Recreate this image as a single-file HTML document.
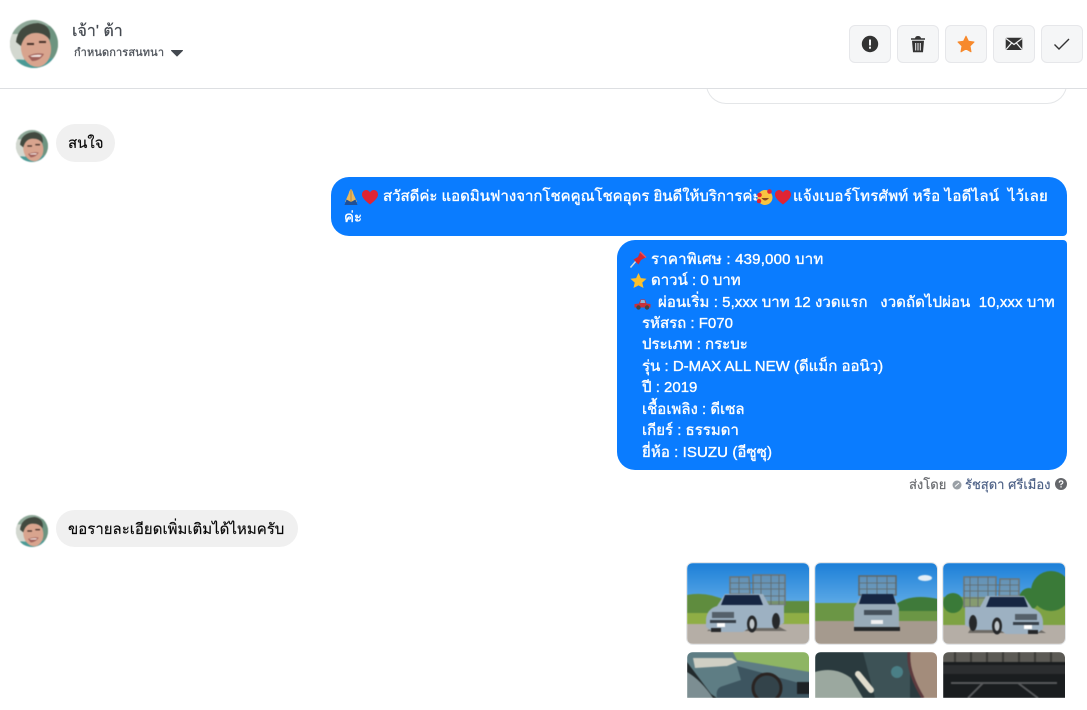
<!DOCTYPE html>
<html lang="th"><head><meta charset="utf-8"><title>Chat</title>
<style>
*{box-sizing:border-box}
html,body{margin:0;padding:0;background:#fff}
body{width:1087px;height:710px;position:relative;overflow:hidden;font-family:"Liberation Sans","Noto Sans CJK SC",sans-serif;color:#050505}
.a{position:absolute}
.t{position:absolute;white-space:pre;font-size:15px;line-height:21.5px;-webkit-text-stroke:.15px currentColor}
.w{color:#fff;-webkit-text-stroke:.35px #fff}
.btn{position:absolute;top:25px;width:42px;height:38px;background:#f5f6f7;border:1px solid #e6e7ea;border-radius:6px}
.btn svg{position:absolute;left:9px;top:7px}
.blue{position:absolute;background:#0a7cff}
.ph{position:absolute;width:122px;border-radius:6px;overflow:hidden;box-shadow:0 0 0 1px #e4e6e8}
.ph svg{filter:blur(.45px)}
.av{filter:blur(.6px)}
svg{display:block}
</style></head><body>
<svg width="0" height="0" style="position:absolute"><defs>
<clipPath id="c"><circle cx="24" cy="24" r="24"/></clipPath>
<g id="av" clip-path="url(#c)">
<rect width="48" height="48" fill="#8ea898"/>
<rect x="0" y="14" width="14" height="34" fill="#d3d8d0"/>
<rect x="36" y="6" width="12" height="32" fill="#6d9480"/>
<path d="M4 40Q14 38 24 44Q36 38 44 38V48H4Z" fill="#4a9a96"/>
<ellipse cx="26" cy="28" rx="15" ry="19" transform="rotate(-8 26 28)" fill="#d8a48e"/>
<path d="M6 22Q8 4 28 3Q42 5 40 20Q34 12 24 13Q14 14 11 26Z" fill="#42493f"/>
<rect x="17" y="23" width="7" height="2" fill="#4a342c"/><rect x="29" y="21" width="7" height="2" fill="#4a342c"/>
<path d="M18 36Q26 32 34 34Q30 41 22 41Z" fill="#a0615a"/><path d="M20 36Q26 34 32 35L30 37H22Z" fill="#f1e4df"/>
</g>
<linearGradient id="sky" x1="0" y1="0" x2="0" y2="1"><stop offset="0" stop-color="#1c7fd8"/><stop offset=".5" stop-color="#5ca9e6"/><stop offset="1" stop-color="#a0cdec"/></linearGradient>
<g id="truck">
<path d="M43 14H62L63 31H43Z M66 12H98V42H66Z" fill="#8d9596" fill-opacity=".55" stroke="#6d7576" stroke-width="1.500"/>
<path d="M43 20H98M43 26H98M43 33H98M52 14V33M74 12V42M84 12V42M92 12V42" stroke="#5f686a" stroke-width=".8"/>
<path d="M19 56Q20 46 30 43L38 31H76L82 42H97V60L88 65H62L56 69H26L19 64Z" fill="#9db1c2"/>
<path d="M38 32H72L76 42H34Z" fill="#162642"/>
<rect x="25" y="49" width="22" height="6" fill="#55606a"/><rect x="23" y="57" width="26" height="3" fill="#37404a"/><rect x="30" y="60" width="8" height="4" fill="#fff"/>
<ellipse cx="65" cy="61" rx="5" ry="8.500" fill="#26282a"/><ellipse cx="65" cy="61" rx="2.500" ry="5" fill="#c0c6ca"/><ellipse cx="89" cy="58" rx="4" ry="8" fill="#26282a"/><rect x="24" y="65" width="10" height="4" fill="#26282a"/>
</g>
</defs></svg>

<!-- header -->
<svg class="a av" style="left:10px;top:20px" width="48" height="48"><use href="#av"/></svg>
<div class="t" style="left:72px;top:21px;font-size:16px;color:#444950;-webkit-text-stroke:.25px #444950">เจ้า' ต้า</div>
<div class="t" style="left:74px;top:45px;font-size:11px;line-height:16px;color:#50555c;-webkit-text-stroke:.3px #50555c;letter-spacing:.12px">กำหนดการสนทนา</div>
<svg class="a" style="left:171px;top:49px" width="12" height="8"><path d="M.5 1.500H11.500L6 7Z" fill="#444950" stroke="#444950" stroke-linejoin="round"/></svg>

<div class="btn" style="left:849px"><svg width="22" height="22"><circle cx="11" cy="11" r="8.200" fill="#333"/><rect x="10" y="6.500" width="2" height="6" fill="#f5f6f7"/><rect x="10" y="13.700" width="2" height="2" fill="#f5f6f7"/></svg></div>
<div class="btn" style="left:897px"><svg width="22" height="22"><path d="M4 5.200H18V6.800H4Z M8 5.200Q8.500 3 11 3Q13.500 3 14 5.200Z" fill="#333"/><path d="M5 7.800H17L16 19.300H6Z" fill="#333"/><path d="M8.700 10V17.500M11 10V17.500M13.300 10V17.500" stroke="#f5f6f7" stroke-width="1"/></svg></div>
<div class="btn" style="left:945px"><svg width="22" height="22"><path d="M11 3.200L13.500 8.300L19 9L15 13L16 18.800L11 16L6 18.800L7 13L3 9L8.500 8.300Z" fill="#f7892c" stroke="#f7892c" stroke-linejoin="round"/></svg></div>
<div class="btn" style="left:993px"><svg width="22" height="22"><rect x="2.700" y="4.700" width="16.600" height="12.300" rx="1" fill="#333"/><path d="M3 5.500L11 11.500L19 5.500M3 16.500L8.800 9.800M19 16.500L13.200 9.800" stroke="#f5f6f7" stroke-width="1.200" fill="none"/></svg></div>
<div class="btn" style="left:1041px"><svg width="22" height="22"><path d="M3.500 11.500L8 16L18 6" stroke="#333" stroke-width="1.400" fill="none"/></svg></div>

<div class="a" style="left:0;top:88px;width:1087px;height:1px;background:#dddfe2"></div>
<div class="a" style="left:706px;top:70px;width:361px;height:34px;border:1px solid #e4e6e8;border-top:0;border-radius:0 0 20px 20px;clip-path:inset(19px 0 0 0)"></div>

<!-- messages -->
<svg class="a av" style="left:16px;top:130px" width="32" height="32" viewBox="0 0 48 48"><use href="#av"/></svg>
<div class="a" style="left:56px;top:124px;width:59px;height:38px;background:#f0f0f0;border-radius:19px"></div>
<div class="t" style="left:68px;top:133px">สนใจ</div>

<div class="blue" style="left:331px;top:177px;width:736px;height:59px;border-radius:18px 18px 4px 18px"></div>
<svg class="a" style="left:344px;top:188px" width="36" height="18" viewBox="0 0 36 18">
<path d="M7 1Q8.500 2 9.500 6L13 14H1L4.500 6Q5.500 2 7 1Z" fill="#e8b85e"/><path d="M7 2V14" stroke="#a87a30" stroke-width=".7"/><path d="M2.500 11.500L7 14L11.500 11.500L13.500 17H.5Z" fill="#1f4f96"/>
<path d="M26 16.500C20 12 18 9 18 6.500C18 3.800 20 2 22 2C24 2 25.300 3 26 4.500C26.700 3 28 2 30 2C32 2 34 3.800 34 6.500C34 9 32 12 26 16.500Z" fill="#e02434"/></svg>
<div class="t w" style="left:383px;top:186px;letter-spacing:-.03px">สวัสดีค่ะ แอดมินฟางจากโชคคูณโชคอุดร ยินดีให้บริการค่ะ</div>
<svg class="a" style="left:757px;top:188px" width="36" height="18" viewBox="0 0 36 18">
<circle cx="8" cy="9.500" r="7.500" fill="#f8c440"/><circle cx="2.500" cy="7" r="2.300" fill="#e02434"/><circle cx="12.500" cy="3.500" r="2.300" fill="#e02434"/><circle cx="2" cy="13" r="2.300" fill="#e02434"/><path d="M4.500 10Q8 15 12 10Z" fill="#8a4a20"/>
<path d="M26 16.500C20 12 18 9 18 6.500C18 3.800 20 2 22 2C24 2 25.300 3 26 4.500C26.700 3 28 2 30 2C32 2 34 3.800 34 6.500C34 9 32 12 26 16.500Z" fill="#e02434"/></svg>
<div class="t w" style="left:793px;top:186px;letter-spacing:.2px">แจ้งเบอร์โทรศัพท์ หรือ ไอดีไลน์  ไว้เลย</div>
<div class="t w" style="left:344px;top:207px">ค่ะ</div>

<div class="blue" style="left:617px;top:240px;width:450px;height:230px;border-radius:18px 4px 18px 18px"></div>
<svg class="a" style="left:630px;top:251px" width="17" height="17" viewBox="0 0 17 17"><path d="M.5 16.500L6.500 9.500" stroke="#d3d8de" stroke-width="1.500"/><path d="M3.500 8.500L8 6L10 1.500L15.500 6.500L11 9L8.500 13.500Z" fill="#d8262f"/><path d="M10 .8L16 6.500" stroke="#e9545c" stroke-width="1.500"/></svg>
<svg class="a" style="left:630px;top:272px" width="17" height="17" viewBox="0 0 18 17"><path d="M9 .5L11.500 6L17.500 6.700L13 10.800L14.300 16.500L9 13.600L3.700 16.500L5 10.800L.5 6.700L6.500 6Z" fill="#fbc02d"/></svg>
<svg class="a" style="left:634px;top:297px" width="17" height="13" viewBox="0 0 17 13"><path d="M.5 7L5 6.500L6.500 2.500H11L12.500 6.500L16.500 7V10.500H.5Z" fill="#c9313a"/><path d="M7 3H10.500L11.300 6H6.200Z" fill="#8fb4d8"/><circle cx="4.500" cy="10.500" r="2.200" fill="#444"/><circle cx="13" cy="10.500" r="2.200" fill="#444"/></svg>
<div class="t w" style="left:651px;top:249px;letter-spacing:.2px">ราคาพิเศษ : 439,000 บาท</div>
<div class="t w" style="left:651px;top:270px">ดาวน์ : 0 บาท</div>
<div class="t w" style="left:658px;top:292px;letter-spacing:.06px">ผ่อนเริ่ม : 5,xxx บาท 12 งวดแรก   งวดถัดไปผ่อน  10,xxx บาท</div>
<div class="t w" style="left:642px;top:313px">รหัสรถ : F070</div>
<div class="t w" style="left:642px;top:334px">ประเภท : กระบะ</div>
<div class="t w" style="left:642px;top:356px">รุ่น : D-MAX ALL NEW (ดีแม็ก ออนิว)</div>
<div class="t w" style="left:642px;top:377px">ปี : 2019</div>
<div class="t w" style="left:642px;top:399px">เชื้อเพลิง : ดีเซล</div>
<div class="t w" style="left:642px;top:420px">เกียร์ : ธรรมดา</div>
<div class="t w" style="left:642px;top:442px;letter-spacing:.08px">ยี่ห้อ : ISUZU (อีซูซุ)</div>

<div class="t" style="left:909px;top:476px;font-size:13px;line-height:18px;color:#65676b">ส่งโดย</div>
<svg class="a" style="left:952px;top:480px" width="10" height="10"><circle cx="5" cy="5" r="4.500" fill="#9aa0a6"/><path d="M3 6.500L7 3" stroke="#fff"/></svg>
<div class="t" style="left:965px;top:476px;font-size:13px;line-height:18px;color:#4b5f85">รัชสุดา ศรีเมือง</div>
<svg class="a" style="left:1055px;top:478px" width="12" height="12"><circle cx="6" cy="6" r="6" fill="#65676b"/><path d="M4.200 4.600Q4.500 2.800 6.200 2.900Q8 3.100 7.800 4.700Q7.600 5.600 6 6.300V7.300" fill="none" stroke="#fff" stroke-width="1.200"/><rect x="5.400" y="8.200" width="1.300" height="1.300" fill="#fff"/></svg>

<svg class="a av" style="left:16px;top:515px" width="32" height="32" viewBox="0 0 48 48"><use href="#av"/></svg>
<div class="a" style="left:56px;top:510px;width:242px;height:37px;background:#f0f0f0;border-radius:19px"></div>
<div class="t" style="left:68px;top:519px">ขอรายละเอียดเพิ่มเติมได้ไหมครับ</div>

<!-- photos -->
<div class="ph" style="left:687px;top:563px;height:81px"><svg width="123" height="81" viewBox="0 0 123 81"><rect width="123" height="81" fill="url(#sky)"/><path d="M0 32Q20 28 40 38H123V50H0Z" fill="#5f8c3e"/><rect y="50" width="123" height="12" fill="#8fae45"/><rect y="61" width="123" height="20" fill="#b5aea6"/><path d="M20 68H100L85 60H30Z" fill="#3f3e3c" opacity=".6"/><use href="#truck"/></svg></div>
<div class="ph" style="left:815px;top:563px;height:81px"><svg width="123" height="81" viewBox="0 0 123 81"><rect width="123" height="81" fill="url(#sky)"/><ellipse cx="110" cy="15" rx="7" ry="3" fill="#e4eef6"/><rect y="40" width="123" height="19" fill="#6b9645"/><path d="M80 42Q95 30 123 36V48H80Z" fill="#3f7a3a"/><rect y="58" width="123" height="23" fill="#a59a8e"/><path d="M44 13H81V32H44Z" fill="#8d9596" fill-opacity=".5" stroke="#5f686a" stroke-width="1.500"/><path d="M44 20H81M44 26H81M52 13V32M62 13V32M72 13V32" stroke="#5f686a" stroke-width=".8"/><path d="M47 31H78L84 45V65H39V45Z" fill="#98abb8"/><path d="M47 31H78L81 41H44Z" fill="#162642"/><rect x="49" y="47" width="28" height="5" fill="#45505a"/><rect x="56" y="57" width="12" height="4" fill="#f1f1f1"/><rect x="39" y="64" width="46" height="4" fill="#26282a"/></svg></div>
<div class="ph" style="left:943px;top:563px;height:81px"><svg width="123" height="81" viewBox="0 0 123 81"><rect width="123" height="81" fill="url(#sky)"/><rect y="34" width="123" height="28" fill="#7ea243"/><ellipse cx="108" cy="28" rx="20" ry="20" fill="#3a7a38"/><ellipse cx="86" cy="36" rx="10" ry="11" fill="#3a7a38"/><ellipse cx="10" cy="40" rx="10" ry="10" fill="#3a7a38"/><rect y="62" width="123" height="19" fill="#b5aea6"/><path d="M25 70H103L90 62H30Z" fill="#3f3e3c" opacity=".6"/><g transform="translate(119 2) scale(-1 1)"><use href="#truck"/></g></svg></div>
<div class="ph" style="left:687px;top:652px;height:46px;border-radius:6px 6px 0 0;box-shadow:none"><svg width="123" height="46" viewBox="0 0 123 46"><rect width="123" height="46" fill="#5e7d84"/><path d="M0 0H123V20L50 8L46 0Z" fill="#8eb564"/><path d="M6 6H45L50 10L40 14L8 16Z" fill="#cfcfc4"/><path d="M0 10L24 42L30 46H0Z" fill="#222a2c"/><path d="M0 20Q14 28 26 46H0Z" fill="#7c8e92"/><path d="M30 46Q28 36 36 34L54 28L50 14L123 34V46Z" fill="#3d5560"/><circle cx="80" cy="36" r="14" fill="#33434a" stroke="#2a2422" stroke-width="3"/><rect x="110" y="30" width="13" height="12" fill="#1d2225"/></svg></div>
<div class="ph" style="left:815px;top:652px;height:46px;border-radius:6px 6px 0 0;box-shadow:none"><svg width="123" height="46" viewBox="0 0 123 46"><rect width="123" height="46" fill="#2a3a3e"/><path d="M48 0H95V46H60Z" fill="#3d5256"/><path d="M0 20Q20 14 36 26L48 46H0Z" fill="#9ba89f"/><path d="M43 22L56 38" stroke="#e0dccd" stroke-width="6" stroke-linecap="round"/><path d="M94 0H123V46H108Q92 20 94 0Z" fill="#a38c7b"/><path d="M94 0Q92 20 108 46" fill="none" stroke="#5d3a3d" stroke-width="3"/><circle cx="82" cy="20" r="6" fill="#4a7f86"/></svg></div>
<div class="ph" style="left:943px;top:652px;height:46px;border-radius:6px 6px 0 0;box-shadow:none"><svg width="123" height="46" viewBox="0 0 123 46"><rect width="123" height="46" fill="#1a1d1f"/><rect width="123" height="10" fill="#5c5a55"/><path d="M12 0V10M28 0V10M44 0V10M60 0V10M76 0V10M92 0V10M108 0V10" stroke="#3b3a37" stroke-width="2"/><rect y="13" width="123" height="9" fill="#2c2e30"/><path d="M8 31H114M25 46L40 31M95 46L75 31" stroke="#56585a" stroke-width="2"/></svg></div>
</body></html>
